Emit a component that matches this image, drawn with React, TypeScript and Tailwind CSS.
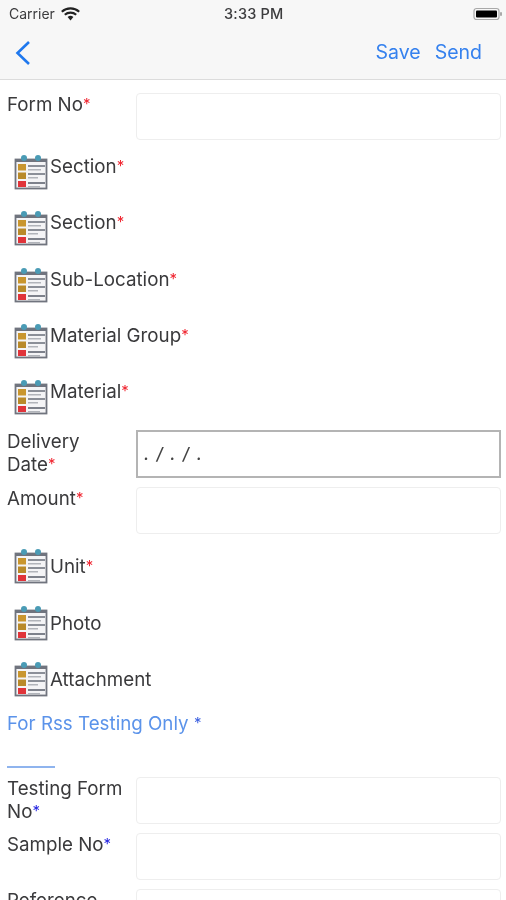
const font = { fontFamily: "Inter, 'Liberation Sans', sans-serif" };

function ListIcon() {
  return (
    <svg width="34" height="36" viewBox="0 0 34 36" className="shrink-0 -mt-[1px]">
      <rect x="1.5" y="5.5" width="31" height="29" fill="#f4f4f6" stroke="#70747e" strokeWidth="1.8" />
      <rect x="1" y="5" width="32" height="3" fill="#70747e" />
      <circle cx="10" cy="4" r="3" fill="#4a9bb5" />
      <circle cx="24" cy="4" r="3" fill="#4a9bb5" />
      <rect x="4" y="10" width="8" height="6.5" fill="#c9962f" />
      <rect x="4" y="18.5" width="8" height="6.5" fill="#b98a2a" />
      <rect x="4" y="27" width="8" height="6" fill="#e0343a" />
      <rect x="14" y="11" width="17" height="2" fill="#8b8f98" />
      <rect x="14" y="15" width="13" height="1.5" fill="#b1b4ba" />
      <rect x="14" y="19" width="17" height="2" fill="#8b8f98" />
      <rect x="14" y="23" width="10" height="1.5" fill="#b1b4ba" />
      <rect x="14" y="28" width="17" height="2" fill="#7d818b" />
      <rect x="14" y="32" width="12" height="1.5" fill="#b1b4ba" />
    </svg>
  );
}

function Star({ color = "text-[#f0232e]" }: { color?: string }) {
  return <span className={`${color} text-[15px] relative -top-[2px]`}>*</span>;
}

function InputRow({ label, star }: { label: string; star?: string }) {
  return (
    <div className="flex mb-[9px]">
      <div className="w-[136px] pl-[7px] pr-[10px] shrink-0 text-[18.75px] leading-[23px] text-[#3a3a3c]">
        {label}
        <Star color={star} />
      </div>
      <div className="h-[47px] w-[365px] rounded-[4px] border border-[#eeeeee] bg-white" />
    </div>
  );
}

function ListRow({ label, required = true, center = false }: { label: string; required?: boolean; center?: boolean }) {
  return (
    <div className="flex h-[56.3px] pl-[14px]">
      <div className="pt-[6px]">
        <ListIcon />
      </div>
      <div className={`pl-[2px] text-[18.75px] leading-[23px] text-[#3a3a3c] ${center ? "pt-[12px]" : "pt-[6px]"}`}>
        {label}
        {required && <Star />}
      </div>
    </div>
  );
}

export default function App() {
  return (
    <div className="w-[506px] h-[900px] overflow-hidden bg-white blur-[0.4px]" style={font}>
      <header className="h-[80px] bg-[#f7f7f7] border-b border-[#dcdcdc]">
        <div className="h-[27px] flex items-center justify-between pl-[9px] pr-[3px] text-[#3c3c3e] relative">
          <div className="flex items-center gap-[6px] text-[14px]">
            <span>Carrier</span>
            <svg width="19" height="14" viewBox="0 0 19 14">
              <path d="M9.5 13.5 L6.6 10 A4.5 4.5 0 0 1 12.4 10 Z" fill="#222" />
              <path d="M0.8 4.8 A13 13 0 0 1 18.2 4.8" fill="none" stroke="#222" strokeWidth="2.2" />
              <path d="M3.8 7.8 A8.6 8.6 0 0 1 15.2 7.8" fill="none" stroke="#222" strokeWidth="2.2" />
            </svg>
          </div>
          <span className="absolute left-[224px] top-[5px] text-[14.5px] leading-[17px] font-medium tracking-[0.2px]">3:33 PM</span>
          <svg width="30" height="14" viewBox="0 0 30 14">
            <rect x="1" y="1.5" width="25" height="11" rx="2.5" fill="none" stroke="#a9a9a9" strokeWidth="1.2" />
            <rect x="3" y="3.5" width="21" height="7" rx="1" fill="#000" />
            <rect x="27" y="5" width="2" height="4" rx="1" fill="#a9a9a9" />
          </svg>
        </div>
        <div className="flex items-center justify-between h-[52px] pl-[14px] pr-[24px] text-[#3581ee] text-[19.5px]">
          <svg width="18" height="26" viewBox="0 0 18 26">
            <path d="M15 2 L3.5 13 L15 24" fill="none" stroke="#1f78ee" strokeWidth="2.6" />
          </svg>
          <div className="flex gap-[14px]">
            <span>Save</span>
            <span>Send</span>
          </div>
        </div>
      </header>
      <main className="pt-[13px]">
        <InputRow label="Form No" />
        <ListRow label="Section" />
        <ListRow label="Section" />
        <ListRow label="Sub-Location" />
        <ListRow label="Material Group" />
        <ListRow label="Material" />
        <div className="flex mb-[9px]">
          <div className="w-[136px] pl-[7px] pr-[10px] shrink-0 text-[18.75px] leading-[23px] text-[#3a3a3c]">
            Delivery Date
            <Star />
          </div>
          <div className="h-[48px] w-[365px] border-2 border-[#b4b4b4] pl-[6px] flex items-center text-[17px] font-medium italic text-[#444] [word-spacing:3px]">
            <span>. / . / .</span>
          </div>
        </div>
        <InputRow label="Amount" />
        <ListRow label="Unit" center />
        <ListRow label="Photo" required={false} center />
        <ListRow label="Attachment" required={false} center />
        <div className="h-[54px] pl-[7px] text-[18.75px] leading-[23px] text-[#5b93ea]">
          For Rss Testing Only <Star color="text-[#3a5fe0]" />
        </div>
        <div className="ml-[7px] w-[48px] border-t-2 border-[#8fb4ee] mb-[9px]" />
        <InputRow label="Testing Form No" star="text-[#1f1fe0]" />
        <InputRow label="Sample No" star="text-[#1f1fe0]" />
        <InputRow label="Reference No" star="text-[#1f1fe0]" />
      </main>
    </div>
  );
}
